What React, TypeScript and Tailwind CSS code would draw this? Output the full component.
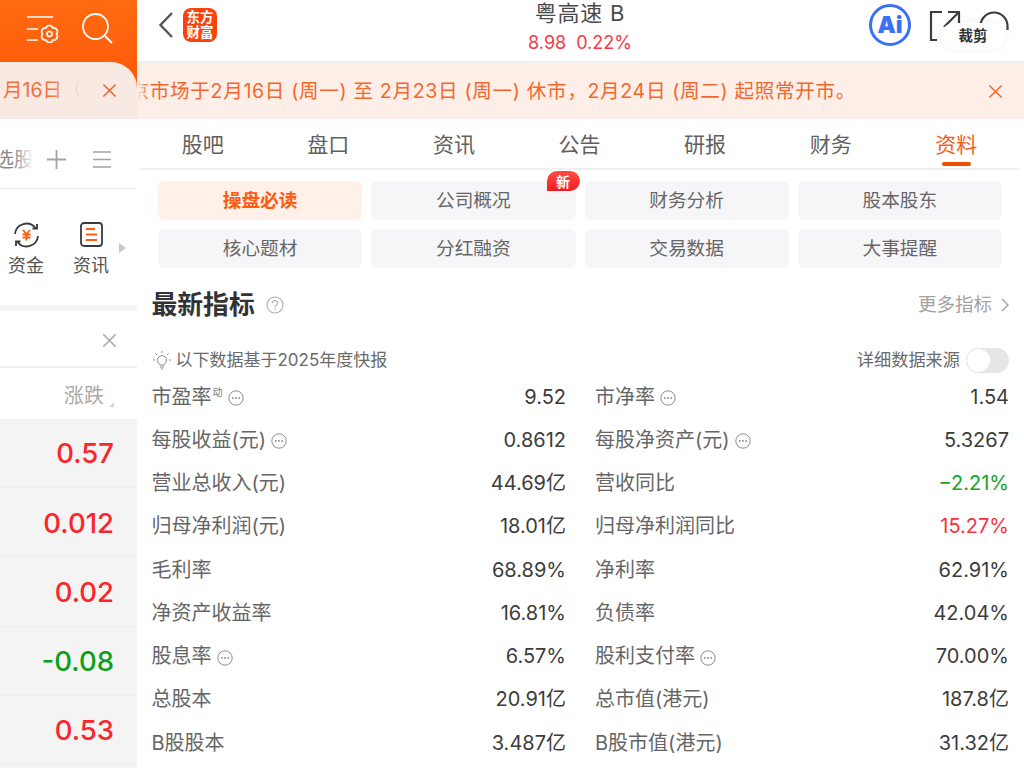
import { Fragment } from "react";

const FONT = "font-['Inter','Noto_Sans_CJK_SC',sans-serif]";

const TABS = ["股吧", "盘口", "资讯", "公告", "研报", "财务", "资料"];
const CHIPS = ["操盘必读", "公司概况", "财务分析", "股本股东", "核心题材", "分红融资", "交易数据", "大事提醒"];

type Cell = { label: string; value: string; sup?: string; info?: boolean; tone?: "up" | "down" };

const ROWS: [Cell, Cell][] = [
  [{ label: "市盈率", sup: "动", info: true, value: "9.52" }, { label: "市净率", info: true, value: "1.54" }],
  [{ label: "每股收益(元)", info: true, value: "0.8612" }, { label: "每股净资产(元)", info: true, value: "5.3267" }],
  [{ label: "营业总收入(元)", value: "44.69亿" }, { label: "营收同比", value: "−2.21%", tone: "down" }],
  [{ label: "归母净利润(元)", value: "18.01亿" }, { label: "归母净利润同比", value: "15.27%", tone: "up" }],
  [{ label: "毛利率", value: "68.89%" }, { label: "净利率", value: "62.91%" }],
  [{ label: "净资产收益率", value: "16.81%" }, { label: "负债率", value: "42.04%" }],
  [{ label: "股息率", info: true, value: "6.57%" }, { label: "股利支付率", info: true, value: "70.00%" }],
  [{ label: "总股本", value: "20.91亿" }, { label: "总市值(港元)", value: "187.8亿" }],
  [{ label: "B股股本", value: "3.487亿" }, { label: "B股市值(港元)", value: "31.32亿" }],
];

const CHANGES = [
  { text: "0.57", tone: "text-[#fb2529]" },
  { text: "0.012", tone: "text-[#fb2529]" },
  { text: "0.02", tone: "text-[#fb2529]" },
  { text: "-0.08", tone: "text-[#0a9f14]" },
  { text: "0.53", tone: "text-[#fb2529]" },
];

function Cross({ size, color, width = 1.6 }: { size: number; color: string; width?: number }) {
  return (
    <svg width={size} height={size} viewBox="0 0 16 16" fill="none" stroke={color} strokeWidth={width}>
      <path d="M1.5 1.5 14.5 14.5M14.5 1.5 1.5 14.5" />
    </svg>
  );
}

function InfoDots() {
  return (
    <svg width="16" height="16" viewBox="0 0 16 16" fill="none" className="ml-[5px] mt-[3px] shrink-0">
      <circle cx="8" cy="8" r="7.2" stroke="#8d8d8d" strokeWidth="1" />
      <circle cx="4.8" cy="8" r="0.9" fill="#8d8d8d" />
      <circle cx="8" cy="8" r="0.9" fill="#8d8d8d" />
      <circle cx="11.2" cy="8" r="0.9" fill="#8d8d8d" />
    </svg>
  );
}

function LeftPanel() {
  return (
    <div className="flex h-full w-[137px] shrink-0 flex-col overflow-hidden bg-white">
      <div className="bg-gradient-to-b from-[#ff6a12] to-[#ff5204]">
        <div className="flex h-[62px] items-center justify-end gap-[22px] pr-[24px] pb-[5px]">
          <svg width="34" height="28" viewBox="0 0 34 28" fill="none" stroke="white" strokeWidth="1.7">
            <path d="M1 2h26M1 14h11M1 25h11" />
            <path d="M30.500 19a3.700 3.700 0 0 1-3.500 6 3.700 3.700 0 0 1-7 0 3.700 3.700 0 0 1-3.500-6 3.700 3.700 0 0 1 3.500-6 3.700 3.700 0 0 1 7 0 3.700 3.700 0 0 1 3.500 6Z" />
            <circle cx="23.500" cy="19" r="2.500" />
          </svg>
          <svg width="31" height="31" viewBox="0 0 31 31" fill="none" stroke="white" strokeWidth="1.800">
            <circle cx="13.500" cy="13.500" r="12.500" />
            <path d="M23 23 30 30" />
          </svg>
        </div>
        <div className="relative flex h-[57px] items-center justify-end overflow-hidden rounded-tr-[26px] bg-[#f8e9e3] pr-[20px]">
          <span className="absolute left-[3px] top-[15px] text-[19.500px] leading-[26px] whitespace-nowrap text-[#f4703a]">
            月16日（
          </span>
          <div className="absolute inset-y-0 left-[50px] w-[32px] bg-gradient-to-r from-transparent to-[#f8e9e3]" />
          <Cross size={15} color="#f0602a" />
        </div>
      </div>
      <div className="relative flex h-[70px] shrink-0 items-center justify-end gap-[27px] border-b border-[#ececec] pr-[26px] pt-[12px]">
        <span className="absolute right-[103px] top-[27px] whitespace-nowrap text-[20px] leading-[28px] text-[#8a8a8a]">选股</span>
        <div className="absolute left-[14px] top-0 h-full w-[20px] bg-gradient-to-r from-transparent to-white" />
        <svg width="19" height="19" viewBox="0 0 19 19" stroke="#a3a3a3" strokeWidth="1.800">
          <path d="M0 9.500h19M9.500 0v19" />
        </svg>
        <svg width="18" height="17" viewBox="0 0 18 17" stroke="#a3a3a3" strokeWidth="1.700">
          <path d="M0 1h18M0 8.500h18M0 16h18" />
        </svg>
      </div>
      <div className="relative flex h-[116px] shrink-0 pt-[33px]">
        <div className="absolute left-[7px] flex w-[38px] flex-col items-center">
          <svg width="27" height="26" viewBox="0 0 27 26" fill="none">
            <path d="M2 12A11.500 11.500 0 0 1 22.500 6M25 14A11.500 11.500 0 0 1 4.500 20" stroke="#3a3a3a" strokeWidth="1.800" />
            <path d="M19.500 6.500h4.500V2M7.500 19.500H3V24" stroke="#3a3a3a" strokeWidth="1.800" />
            <path d="M10 8l3.500 4 3.500-4M9.500 12.500h8M9.500 15.500h8M13.500 12v6.500" stroke="#ff5a10" strokeWidth="1.800" />
          </svg>
          <span className="mt-[5px] text-[18px] leading-[26px] whitespace-nowrap text-[#555]">资金</span>
        </div>
        <div className="absolute left-[72px] flex w-[38px] flex-col items-center">
          <svg width="23" height="25" viewBox="0 0 23 25" fill="none">
            <rect x="1" y="1" width="21" height="23" rx="3" stroke="#3a3a3a" strokeWidth="1.800" />
            <path d="M6 7h9M6 12.500h11M6 18h11" stroke="#ff5a10" strokeWidth="1.800" />
          </svg>
          <span className="mt-[6px] text-[18px] leading-[26px] whitespace-nowrap text-[#555]">资讯</span>
        </div>
        <div className="absolute left-[119px] top-[54px] h-0 w-0 border-y-[5px] border-l-[7px] border-y-transparent border-l-[#c8c8c8]" />
      </div>
      <div className="h-[6px] shrink-0 bg-[#f6f6f7]" />
      <div className="flex h-[57px] shrink-0 items-center justify-end border-b-2 border-[#f1f1f1] pr-[20px] pt-[3px]">
        <Cross size={15} color="#b0b0b0" width={1.800} />
      </div>
      <div className="relative flex h-[51px] shrink-0 items-center justify-end pr-[33px] pt-[4px]">
        <span className="text-[20px] leading-[28px] text-[#a8a8a8]">涨跌</span>
        <div className="absolute right-[23px] top-[34px] h-0 w-0 border-b-[5px] border-l-[5px] border-b-[#d4d4d4] border-l-transparent" />
      </div>
      <div className="flex flex-1 flex-col bg-[#f4f4f5]">
        {CHANGES.map((c) => (
          <div
            key={c.text}
            className={`flex h-[69.200px] shrink-0 items-center justify-end border-b border-[#eeeeef] pr-[23px] pt-[2px] text-[27.500px] font-medium ${c.tone}`}
          >
            {c.text}
          </div>
        ))}
      </div>
    </div>
  );
}

function TopBar() {
  return (
    <div className="relative flex h-[63px] shrink-0 items-start border-b-2 border-[#f0f0f0]">
      <svg width="16" height="28" viewBox="0 0 16 28" fill="none" stroke="#555" strokeWidth="2.400" className="ml-[21px] mt-[11px]">
        <path d="M14 2 2.500 14 14 26" />
      </svg>
      <div className="ml-[9px] mt-[8px] flex h-[34px] w-[34px] flex-col items-center justify-center rounded-[8px] bg-[#f9430f] text-[13.500px] leading-[15px] font-bold text-white">
        <span>东方</span>
        <span>财富</span>
      </div>
      <div className="absolute left-[343px] top-0 flex w-[200px] flex-col items-center">
        <span className="text-[22px] leading-[26px] tracking-[0.8px] text-[#4a4a4a]">粤高速 B</span>
        <span className="mt-[4px] flex gap-[10px] text-[18px] leading-[26px] text-[#f5394a]">
          <span>8.98</span>
          <span>0.22%</span>
        </span>
      </div>
      <div className="ml-auto mr-[15px] mt-[4px] flex items-start gap-[18px]">
        <div className="flex h-[42px] w-[42px] items-center justify-center rounded-full border-[3px] border-[#3a70f5] text-[23px] font-black text-[#3a70f5]">
          Ai
        </div>
        <svg width="32" height="32" viewBox="0 0 32 32" fill="none" stroke="#3d3d3d" strokeWidth="2.200" className="mt-[6px]">
          <path d="M13 2H2v28h6M15 17 30 2M19 2h11v11" />
        </svg>
        <svg width="30" height="32" viewBox="0 0 30 32" fill="none" stroke="#3d3d3d" strokeWidth="2.200" className="mt-[6px]">
          <path d="M1.500 16a13.500 13.500 0 0 1 27 0v4" />
        </svg>
      </div>
      <div className="absolute left-[804px] top-[23px] flex h-[26px] w-[64px] items-center justify-center rounded-full bg-white/95 text-[14.500px] font-bold text-[#333] shadow-[0_0_8px_rgba(0,0,0,0.06)]">
        裁剪
      </div>
    </div>
  );
}

function Notice() {
  return (
    <div className="relative flex h-[56px] shrink-0 items-center justify-end overflow-hidden bg-[#fdeee7] pr-[21px]">
      <span className="absolute right-[168px] top-[14px] text-[19.600px] leading-[28px] tracking-[0.65px] whitespace-nowrap text-[#f4672c]">
        京市场于2月16日 (周一) 至 2月23日 (周一) 休市，2月24日 (周二) 起照常开市。
      </span>
      <div className="absolute inset-y-0 left-0 w-[12px] bg-gradient-to-r from-[#fdeee7] to-transparent" />
      <Cross size={15} color="#f4672c" />
    </div>
  );
}

function Tabs() {
  return (
    <div className="ml-[3px] mr-[5px] flex h-[51px] shrink-0 border-b-2 border-[#efefef]">
      {TABS.map((t, i) => (
        <div key={t} className="relative flex flex-1 justify-center pt-[11px] text-[21px] leading-[30px]">
          <span className={i === 6 ? "text-[#f4601c]" : "text-[#606060]"}>{t}</span>
          {i === 6 && <div className="absolute bottom-[2px] h-[4px] w-[29px] rounded-full bg-[#ee4f06]" />}
        </div>
      ))}
    </div>
  );
}

function Chips() {
  return (
    <div className="grid grid-cols-4 gap-x-[9px] gap-y-[9px] pl-[21px] pr-[22px] pt-[11px]">
      {CHIPS.map((c, i) => (
        <div
          key={c}
          className={`relative flex h-[39px] items-center justify-center rounded-[6px] pt-[1px] text-[18.700px] ${
            i === 0 ? "bg-[#fff0ea] font-bold text-[#ff5a10]" : "bg-[#f6f6f8] text-[#666]"
          }`}
        >
          {c}
          {i === 1 && (
            <div className="absolute right-[-4px] top-[-10px] flex h-[20px] w-[33px] items-center justify-center rounded-t-[10px] rounded-br-[10px] bg-gradient-to-b from-[#ff4a45] to-[#ee1a20] text-[14px] font-bold text-white">
              新
            </div>
          )}
        </div>
      ))}
    </div>
  );
}

function Indicators() {
  return (
    <div className="pl-[14.500px] pr-[15px]">
      <div className="mt-[17px] flex h-[40px] items-center">
        <span className="text-[25.800px] leading-[36px] font-bold text-[#333]">最新指标</span>
        <svg width="18" height="18" viewBox="0 0 18 18" fill="none" className="ml-[11px]">
          <circle cx="9" cy="9" r="8" stroke="#ababab" strokeWidth="1.100" />
          <path d="M6.500 7a2.500 2.500 0 1 1 3.800 2.100C9.400 9.700 9 10.200 9 11" stroke="#ababab" strokeWidth="1.100" />
          <circle cx="9" cy="13.300" r="0.800" fill="#ababab" />
        </svg>
        <span className="ml-auto text-[18.500px] text-[#a3a3a3]">更多指标</span>
        <svg width="8" height="14" viewBox="0 0 8 14" fill="none" stroke="#a3a3a3" strokeWidth="1.400" className="ml-[9px]">
          <path d="M1 1 7 7 1 13" />
        </svg>
      </div>
      <div className="mt-[22px] flex h-[26px] items-center">
        <svg width="20" height="20" viewBox="0 0 20 20" fill="none" stroke="#8b8b8b" strokeWidth="1" className="shrink-0">
          <path d="M7 13.500a4.500 4.500 0 1 1 6 0c-.6.500-.8 1-.8 1.500H7.800c0-.5-.2-1-.8-1.500ZM8 17h4M9 19h2" />
          <path d="M10 1v2M3.500 3.500 5 5M16.500 3.500 15 5M1 10h2M17 10h2" />
        </svg>
        <span className="ml-[4px] text-[17px] leading-[24px] text-[#6a6a6a]">以下数据基于2025年度快报</span>
        <span className="ml-auto text-[17.200px] leading-[24px] text-[#6a6a6a]">详细数据来源</span>
        <div className="ml-[6px] h-[25px] w-[43px] rounded-full bg-[#e6e6e8]">
          <div className="h-[25px] w-[25px] rounded-full border border-[#e6e6e8] bg-white" />
        </div>
      </div>
      <div className="mt-[2px] grid grid-cols-[414.500px_414px] gap-x-[29px]">
        {ROWS.map((row, i) => (
          <Fragment key={i}>
            {row.map((cell) => (
              <div key={cell.label} className="flex h-[43.250px] items-center justify-between">
                <span className="flex items-center text-[20px] leading-[28px] text-[#666]">
                  {cell.label}
                  {cell.sup && <sup className="ml-[1px] text-[10px] leading-none text-[#777]">{cell.sup}</sup>}
                  {cell.info && <InfoDots />}
                </span>
                <span
                  className={`text-[20px] leading-[28px] ${
                    cell.tone === "up" ? "text-[#f5333f]" : cell.tone === "down" ? "text-[#12a51f]" : "text-[#3c3c3c]"
                  }`}
                >
                  {cell.value}
                </span>
              </div>
            ))}
          </Fragment>
        ))}
      </div>
    </div>
  );
}

export default function App() {
  return (
    <div className={`flex h-[768px] w-[1024px] overflow-hidden bg-white ${FONT}`}>
      <LeftPanel />
      <div className="flex min-w-0 flex-1 flex-col">
        <TopBar />
        <Notice />
        <Tabs />
        <Chips />
        <Indicators />
      </div>
    </div>
  );
}
